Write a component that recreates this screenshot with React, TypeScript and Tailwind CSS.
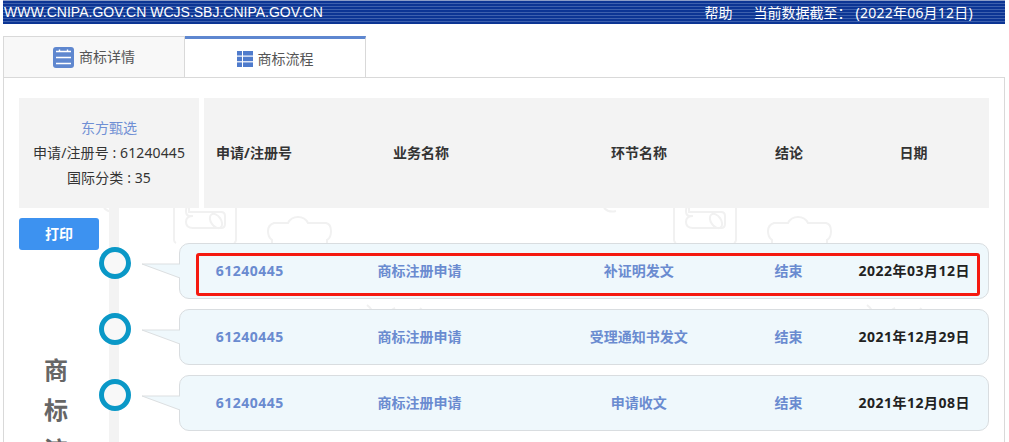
import React from 'react';

const ROWS = [
  { no: '61240445', biz: '商标注册申请', step: '补证明发文', result: '结束', date: '2022年03月12日', marked: true },
  { no: '61240445', biz: '商标注册申请', step: '受理通知书发文', result: '结束', date: '2021年12月29日', marked: false },
  { no: '61240445', biz: '商标注册申请', step: '申请收文', result: '结束', date: '2021年12月08日', marked: false },
];

const FONT = "font-['Noto_Sans','Noto_Sans_CJK_SC',sans-serif]";

const Watermark = () => (
  <svg className="absolute left-0 top-[180px]" width="1009" height="140" fill="none" stroke="#f1f1f1" strokeWidth="2">
    {[0, 500].map(dx => (
      <g key={dx} transform={`translate(${dx} 0)`}>
        <path d="M174 20v40q0 2 2 3M236 20v40q0 2-2 3" />
        <path d="M189 32h32q4 0 4 4v8q0 4-4 4h-28q-7 0-7-6t7-6h-3q-4 0-4-5t3-5z" />
        <ellipse cx="216" cy="41" rx="5" ry="8" transform="rotate(-35 216 41)" />
        <path d="M272 63v-3q-4-3-4-9t6-8h14q3-6 10-6t10 6h18q5 1 5 8t-4 9v3" />
        <path d="M104 28q5 5 12 3" />
        <path d="M367 125q8 6 6 14M395 128q-8 4-6 12M420 128q6 5 6 12" />
      </g>
    ))}
  </svg>
);

const App: React.FC = () => {
  return (
    <div className={`relative h-[442px] overflow-hidden bg-white px-[3px] text-[14px] text-[#333] ${FONT}`}>
      <Watermark />

      {/* top strip */}
      <div className="relative mr-[1px] flex h-[24px] items-center justify-between border-t border-[#8a9cc8] bg-[#0c3594] bg-[repeating-linear-gradient(180deg,#0c3594_0,#0c3594_2px,#3d60ad_2px,#3d60ad_3px)] pl-[1px] pr-[32px] text-white">
        <span className="font-['Liberation_Sans',sans-serif] text-[14px]">WWW.CNIPA.GOV.CN WCJS.SBJ.CNIPA.GOV.CN</span>
        <div className="flex items-center">
          <span>帮助</span>
          <span className="ml-[21px]">当前数据截至：</span>
          <span className="ml-[4px] tracking-[0.23px]">(2022年06月12日)</span>
        </div>
      </div>

      {/* tabs */}
      <div className="relative mr-[1px] mt-[12px] flex h-[42px] border-b border-[#d9d9d9]">
        <div className="flex w-[182px] items-center justify-center gap-[5px] border-x border-t border-[#d9d9d9] bg-[#f8f8f8] text-[#555]">
          <svg width="21" height="21" viewBox="0 0 21 21">
            <rect width="21" height="21" rx="3" fill="#5f87cf" />
            <path d="M3 4.5h15M3 10.5h15M3 16.500h15" stroke="#fff" strokeWidth="1.6" />
            <path d="M6.500 2.500v2M14.500 2.500v2" stroke="#fff" strokeWidth="1.400" />
          </svg>
          <span className="pb-[2px]">商标详情</span>
        </div>
        <div className="flex w-[181px] items-center justify-center gap-[5px] border-r border-t-[3px] border-r-[#d9d9d9] border-t-[#5e87d0] pt-[2px] text-[#555]">
          <svg width="16" height="16" viewBox="0 0 16 16" fill="#4f7bcc">
            <rect width="5" height="4.500" />
            <rect x="6" width="10" height="4.500" />
            <rect y="5.700" width="5" height="4.500" />
            <rect x="6" y="5.700" width="10" height="4.500" />
            <rect y="11.400" width="5" height="4.600" />
            <rect x="6" y="11.400" width="10" height="4.600" />
          </svg>
          <span className="pb-[2px]">商标流程</span>
        </div>
      </div>

      {/* panel */}
      <div className="relative mr-[1px] h-[400px] border-x border-[#d9d9d9] px-[15px] pt-[20px]">
        <div className="flex gap-[5px]">
          <div className="flex h-[110px] w-[180px] flex-col items-center justify-center bg-[#f3f3f3] pb-[2px] leading-[25px]">
            <span className="text-[#6f8fd4]">东方甄选</span>
            <span className="tracking-[0.1px]">申请/注册号 : 61240445</span>
            <span className="tracking-[0.1px]">国际分类 : 35</span>
          </div>
          <div className="flex h-[110px] w-[785px] items-center bg-[#f3f3f3] pb-[2px] text-center font-bold">
            <span className="w-[100px]">申请/注册号</span>
            <span className="w-[234px]">业务名称</span>
            <span className="w-[202px]">环节名称</span>
            <span className="w-[98px]">结论</span>
            <span className="w-[151px]">日期</span>
          </div>
        </div>

        <div className="relative flex">
          {/* timeline line */}
          <div className="absolute left-[90px] top-0 h-[300px] w-[10px] bg-[#f3f3f3]" />

          <div className="relative w-[160px] shrink-0 pt-[10px]">
            <button className="h-[32px] w-[80px] rounded-[3px] bg-[#3d92f0] pb-[1px] font-bold text-white">打印</button>
            <div className="mt-[100px] w-[74px] text-center text-[24px] font-bold leading-[40px] text-[#666]">
              <div>商</div>
              <div>标</div>
              <div>流</div>
              <div>程</div>
            </div>
          </div>

          <div className="flex w-[810px] flex-col gap-[10px] pt-[35px]">
            {ROWS.map((row, i) => (
              <div key={i} className="relative flex h-[56px] items-center rounded-[10px] border border-[#d9dde0] bg-[#eff8fc] pb-[2px] text-center font-bold">
                <div className="absolute left-[-81px] top-[3px] h-[32px] w-[32px] rounded-full border-[5px] border-[#0a98c7] bg-[#f8f8f8]" />
                <svg className="absolute left-[-39px] top-[19px]" width="40" height="16" viewBox="0 0 40 16">
                  <path d="M1 1L39 1V15z" fill="#eff8fc" />
                  <path d="M39 1H1L39 15" fill="none" stroke="#dcdfe1" />
                </svg>
                <span className="w-[140px] tracking-[0.5px] text-[#6a8bd0]">{row.no}</span>
                <span className="w-[200px] text-[#6a8bd0]">{row.biz}</span>
                <span className="w-[240px] text-[#6a8bd0]">{row.step}</span>
                <span className="w-[60px] text-[#6a8bd0]">{row.result}</span>
                <span className="w-[170px] pl-[22px] tracking-[0.5px] text-[#222]">{row.date}</span>
                {row.marked && (
                  <div className="absolute left-[16px] top-[9px] h-[43px] w-[784px] rounded-[3px] border-[3px] border-[#f5190f]" />
                )}
              </div>
            ))}
          </div>
        </div>
      </div>
    </div>
  );
};

export default App;
